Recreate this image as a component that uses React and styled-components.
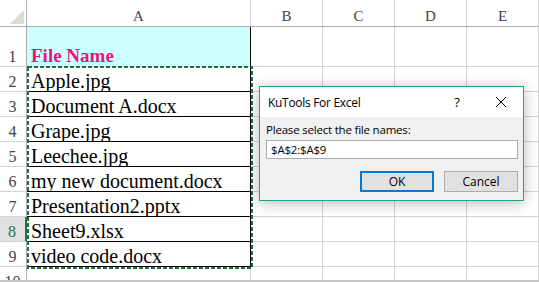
import React from "react";
import styled, { createGlobalStyle } from "styled-components";

const GlobalStyle = createGlobalStyle`
  html, body {
    margin: 0;
    padding: 0;
    background: #ffffff;
    overflow: hidden;
  }
`;

const columns = ["A", "B", "C", "D", "E"];
const files = [
  "Apple.jpg",
  "Document A.docx",
  "Grape.jpg",
  "Leechee.jpg",
  "my new document.docx",
  "Presentation2.pptx",
  "Sheet9.xlsx",
  "video code.docx",
];

const Page = styled.div`
  position: relative;
  width: 539px;
  height: 282px;
  overflow: hidden;
  background: #fff;
`;

const Sheet = styled.div`
  display: grid;
  grid-template-columns: 27px 224px repeat(4, 72px);
  grid-template-rows: 27px 40px repeat(9, 25px);
`;

const Corner = styled.div`
  position: relative;
  border-right: 1px solid #ababab;
  border-bottom: 1px solid #ababab;
  box-sizing: border-box;
  &::after {
    content: "";
    position: absolute;
    left: 10px;
    top: 10px;
    width: 0;
    height: 0;
    border-left: 14px solid transparent;
    border-bottom: 14px solid #dadada;
  }
`;

const ColHead = styled.div`
  display: flex;
  align-items: center;
  justify-content: center;
  box-sizing: border-box;
  border-right: 1px solid #d4d4d4;
  border-bottom: 1px solid #ababab;
  font-family: "Liberation Serif", serif;
  font-size: 15px;
  color: #444;
  padding-top: 7px;
`;

const RowHead = styled.div`
  display: flex;
  align-items: flex-end;
  justify-content: center;
  box-sizing: border-box;
  border-right: ${(p) => (p.$active ? "2px solid #217346" : "1px solid #ababab")};
  border-bottom: 1px solid #d4d4d4;
  background: ${(p) => (p.$active ? "#e1e1e1" : "#fff")};
  color: ${(p) => (p.$active ? "#217346" : "#444")};
  font-family: "Liberation Serif", serif;
  font-size: 16px;
  line-height: 18px;
  padding-right: 1px;
`;

const Cell = styled.div`
  display: flex;
  align-items: flex-end;
  box-sizing: border-box;
  border-right: 1px solid ${(p) => (p.$dark ? "#000" : "#d4d4d4")};
  border-bottom: 1px solid ${(p) => (p.$dark ? "#000" : "#d4d4d4")};
  background: ${(p) => (p.$fill ? "#ccffff" : "#fff")};
  padding-left: 4px;
  font-family: "Liberation Serif", serif;
  font-size: 20px;
  line-height: 20px;
  color: #000;
  white-space: nowrap;
`;

const HeaderCell = styled(Cell)`
  border-bottom-color: #d4d4d4;
  color: #ec147a;
  font-weight: bold;
  font-size: 19px;
  line-height: 20px;
`;

const Ants = styled.svg`
  position: absolute;
  left: 27px;
  top: 66px;
  width: 226px;
  height: 203px;
  pointer-events: none;
`;

const BottomBar = styled.div`
  position: absolute;
  left: 0;
  right: 0;
  bottom: 0;
  height: 2px;
  background: #c6c6c6;
`;

const Dialog = styled.div`
  position: absolute;
  left: 259px;
  top: 86px;
  width: 265px;
  height: 115px;
  box-sizing: border-box;
  border: 1px solid #1ca58e;
  background: #f0f0f0;
  box-shadow: 0 2px 14px rgba(0, 0, 0, 0.28);
  display: flex;
  flex-direction: column;
  font-family: "Open Sans", "Noto Sans", sans-serif;
  font-size: 11.5px;
  color: #000;
`;

const TitleBar = styled.div`
  height: 30px;
  background: #fff;
  display: flex;
  align-items: center;
  padding-left: 8px;
`;

const Title = styled.span`
  flex: 1;
  font-size: 12px;
  letter-spacing: -0.3px;
`;

const TitleButton = styled.span`
  width: 44px;
  display: flex;
  justify-content: center;
  align-items: center;
  font-size: 13px;
`;

const Body = styled.div`
  display: flex;
  flex-direction: column;
  padding: 5px 5px 0 6px;
`;

const Label = styled.div`
  line-height: 16px;
  letter-spacing: -0.2px;
`;

const Input = styled.div`
  margin-top: 2px;
  height: 19px;
  box-sizing: border-box;
  border: 1px solid #acacac;
  background: #fff;
  padding-left: 4px;
  display: flex;
  align-items: center;
  letter-spacing: -0.2px;
`;

const Buttons = styled.div`
  margin-top: 12px;
  display: flex;
  justify-content: flex-end;
  gap: 10px;
`;

const Button = styled.div`
  width: 74px;
  height: 21px;
  box-sizing: border-box;
  border: ${(p) => (p.$primary ? "2px solid #0078d7" : "1px solid #adadad")};
  background: #e1e1e1;
  display: flex;
  align-items: center;
  justify-content: center;
  font-size: 12px;
`;

export default function App() {
  return (
    <Page>
      <GlobalStyle />
      <Sheet>
        <Corner />
        {columns.map((c) => (
          <ColHead key={c}>{c}</ColHead>
        ))}

        <RowHead>1</RowHead>
        <HeaderCell $fill $dark>File Name</HeaderCell>
        {columns.slice(1).map((c) => (
          <Cell key={c} />
        ))}

        {files.map((f, i) => (
          <React.Fragment key={f}>
            <RowHead $active={i + 2 === 8}>{i + 2}</RowHead>
            <Cell $dark>{f}</Cell>
            {columns.slice(1).map((c) => (
              <Cell key={c} />
            ))}
          </React.Fragment>
        ))}

        <RowHead>10</RowHead>
        {columns.map((c) => (
          <Cell key={c} />
        ))}
      </Sheet>

      <Ants viewBox="0 0 226 203">
        <rect
          x="1"
          y="1"
          width="224"
          height="201"
          fill="none"
          stroke="#1f6e45"
          strokeWidth="2"
          strokeDasharray="4 2"
        />
      </Ants>

      <BottomBar />

      <Dialog>
        <TitleBar>
          <Title>KuTools For Excel</Title>
          <TitleButton>?</TitleButton>
          <TitleButton>
            <svg width="12" height="12" viewBox="0 0 12 12">
              <path d="M1 1 L11 11 M11 1 L1 11" stroke="#000" strokeWidth="1" />
            </svg>
          </TitleButton>
        </TitleBar>
        <Body>
          <Label>Please select the file names:</Label>
          <Input>$A$2:$A$9</Input>
          <Buttons>
            <Button $primary>OK</Button>
            <Button>Cancel</Button>
          </Buttons>
        </Body>
      </Dialog>
    </Page>
  );
}
